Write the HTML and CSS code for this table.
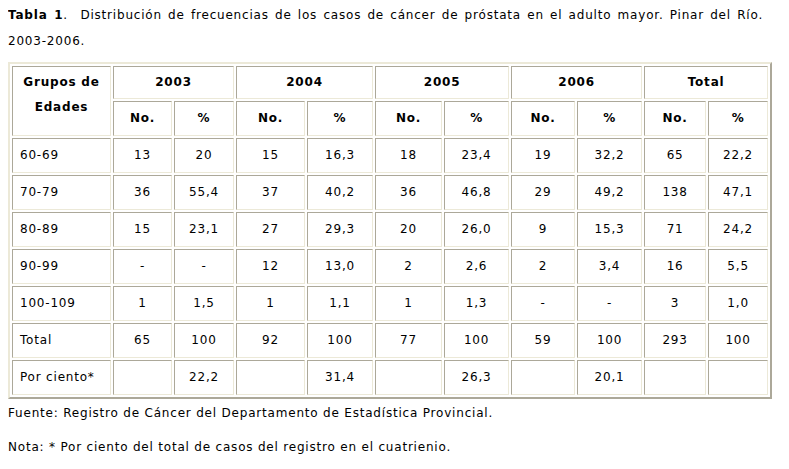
FILE: index.html
```html
<!DOCTYPE html>
<html lang="es">
<head>
<meta charset="utf-8">
<title>Tabla 1</title>
<link rel="stylesheet" href="styles.css">
</head>
<body>
<p class="title"><b>Tabla 1</b>.&nbsp; Distribución de frecuencias de los casos de cáncer de próstata en el adulto mayor. Pinar del Río. 2003-2006.</p>
<table class="data">
  <colgroup>
    <col class="c1"><col class="c2"><col class="c3"><col class="c4"><col class="c5"><col class="c6"><col class="c7"><col class="c8"><col class="c9"><col class="c10"><col class="c11">
  </colgroup>
  <thead>
    <tr class="r1">
      <th rowspan="2" class="group">Grupos de Edades</th>
      <th colspan="2">2003</th>
      <th colspan="2">2004</th>
      <th colspan="2">2005</th>
      <th colspan="2">2006</th>
      <th colspan="2">Total</th>
    </tr>
    <tr class="r2">
      <th>No.</th><th>%</th>
      <th>No.</th><th>%</th>
      <th>No.</th><th>%</th>
      <th>No.</th><th>%</th>
      <th>No.</th><th>%</th>
    </tr>
  </thead>
  <tbody>
    <tr><td class="lbl">60-69</td><td>13</td><td>20</td><td>15</td><td>16,3</td><td>18</td><td>23,4</td><td>19</td><td>32,2</td><td>65</td><td>22,2</td></tr>
    <tr><td class="lbl">70-79</td><td>36</td><td>55,4</td><td>37</td><td>40,2</td><td>36</td><td>46,8</td><td>29</td><td>49,2</td><td>138</td><td>47,1</td></tr>
    <tr><td class="lbl">80-89</td><td>15</td><td>23,1</td><td>27</td><td>29,3</td><td>20</td><td>26,0</td><td>9</td><td>15,3</td><td>71</td><td>24,2</td></tr>
    <tr><td class="lbl">90-99</td><td>-</td><td>-</td><td>12</td><td>13,0</td><td>2</td><td>2,6</td><td>2</td><td>3,4</td><td>16</td><td>5,5</td></tr>
    <tr><td class="lbl">100-109</td><td>1</td><td>1,5</td><td>1</td><td>1,1</td><td>1</td><td>1,3</td><td>-</td><td>-</td><td>3</td><td>1,0</td></tr>
    <tr><td class="lbl">Total</td><td>65</td><td>100</td><td>92</td><td>100</td><td>77</td><td>100</td><td>59</td><td>100</td><td>293</td><td>100</td></tr>
    <tr><td class="lbl">Por ciento*</td><td></td><td>22,2</td><td></td><td>31,4</td><td></td><td>26,3</td><td></td><td>20,1</td><td></td><td></td></tr>
  </tbody>
</table>
<p class="note">Fuente: Registro de Cáncer del Departamento de Estadística Provincial.</p>
<p class="note second">Nota: * Por ciento del total de casos del registro en el cuatrienio.</p>
</body>
</html>
```

FILE: styles.css
```css
html, body {
  background: #ffffff;
}
body {
  margin: 0 8px;
  font-family: "DejaVu Sans", Verdana, sans-serif;
  font-size: 12px;
  letter-spacing: 0.8px;
  color: #000000;
}
.title {
  margin: 2px 0 0;
  width: 755px;
  line-height: 26px;
  text-align: justify;
}
.data {
  margin-top: 8px;
  width: 764px;
  table-layout: fixed;
  border-collapse: separate;
  border-spacing: 2px;
  border-style: solid;
  border-width: 2px;
  border-color: #ece9d8 #aca899 #aca899 #ece9d8;
  box-sizing: border-box;
}
.c1 { width: 99px; }
.c2 { width: 59px; }
.c3 { width: 60px; }
.c4 { width: 69px; }
.c5 { width: 66px; }
.c6 { width: 67px; }
.c7 { width: 65px; }
.c8 { width: 64px; }
.c9 { width: 65px; }
.c10 { width: 62px; }
.c11 { width: 60px; }
.data th,
.data td {
  box-sizing: border-box;
  border-style: solid;
  border-width: 1px;
  border-color: #aca899 #ece9d8 #ece9d8 #aca899;
  padding: 0 7px;
  line-height: 25px;
  text-align: center;
  vertical-align: middle;
  height: 35px;
}
.data th {
  font-weight: bold;
}
.data .r1 th {
  height: 33px;
}
.data th.group {
  vertical-align: top;
  padding-top: 3px;
}
.data td.lbl {
  text-align: left;
}
.note {
  margin: 1px 0 0;
  line-height: 26px;
}
.note.second {
  margin-top: 8px;
}
```
